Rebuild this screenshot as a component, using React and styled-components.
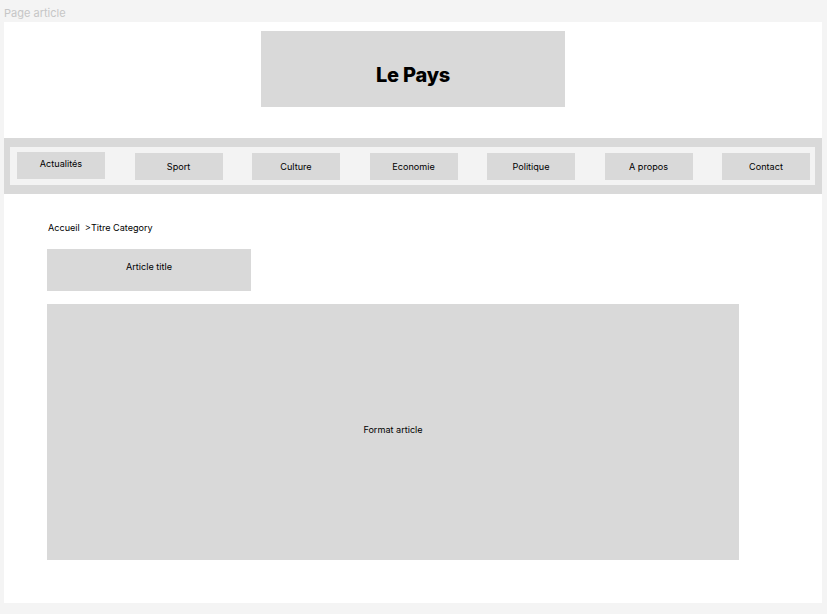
import React from 'react';
import styled, { createGlobalStyle } from 'styled-components';

const GlobalStyle = createGlobalStyle`
  body {
    margin: 0;
    background: #f4f4f4;
    font-family: Inter, "Noto Sans", sans-serif;
    color: #000;
  }
`;

const Label = styled.div`
  height: 22px;
  padding-left: 4px;
  font-size: 11px;
  line-height: 26px;
  color: #c6c6c6;
`;

const Frame = styled.div`
  margin-left: 4px;
  width: 818px;
  height: 581px;
  background: #fff;
  padding-top: 9px;
  box-sizing: border-box;
`;

const Logo = styled.div`
  width: 304px;
  height: 76px;
  margin: 0 auto;
  background: #d9d9d9;
  display: flex;
  align-items: center;
  justify-content: center;
  padding-top: 12px;
  box-sizing: border-box;
  font-size: 20px;
  font-weight: 800;
  letter-spacing: -0.2px;
`;

const NavBar = styled.nav`
  margin-top: 31px;
  height: 56px;
  background: #d9d9d9;
  padding: 9px 7px 9px 6px;
  box-sizing: border-box;
`;

const NavInner = styled.div`
  height: 38px;
  background: #f3f3f3;
  display: flex;
  justify-content: space-between;
  align-items: flex-start;
  padding: 5px 5px 0 7px;
  box-sizing: border-box;
`;

const NavButton = styled.div`
  width: 88px;
  height: 27px;
  margin-top: ${p => (p.$raised ? '0' : '1px')};
  background: #d9d9d9;
  font-size: 9.1px;
  display: flex;
  align-items: center;
  justify-content: center;
  padding-bottom: ${p => (p.$raised ? '5px' : '0')};
  box-sizing: border-box;
`;

const Content = styled.div`
  padding: 0 0 0 43px;
`;

const Breadcrumb = styled.div`
  margin-top: 28px;
  padding-left: 1px;
  font-size: 9.1px;
  line-height: 12px;
  white-space: pre;
`;

const TitleBox = styled.div`
  margin-top: 15px;
  width: 204px;
  height: 42px;
  background: #d9d9d9;
  font-size: 9.1px;
  text-align: center;
  padding-top: 12px;
  box-sizing: border-box;
`;

const ArticleBox = styled.div`
  margin-top: 13px;
  width: 692px;
  height: 256px;
  background: #d9d9d9;
  font-size: 9.1px;
  display: flex;
  align-items: center;
  justify-content: center;
  padding-bottom: 6px;
  box-sizing: border-box;
`;

const navItems = ['Actualités', 'Sport', 'Culture', 'Economie', 'Politique', 'A propos', 'Contact'];

export default function App() {
  return (
    <>
      <GlobalStyle />
      <Label>Page article</Label>
      <Frame>
        <Logo>Le Pays</Logo>
        <NavBar>
          <NavInner>
            {navItems.map((item, i) => (
              <NavButton key={item} $raised={i === 0}>{item}</NavButton>
            ))}
          </NavInner>
        </NavBar>
        <Content>
          <Breadcrumb>{'Accueil  >Titre Category'}</Breadcrumb>
          <TitleBox>Article title</TitleBox>
          <ArticleBox>Format article</ArticleBox>
        </Content>
      </Frame>
    </>
  );
}
